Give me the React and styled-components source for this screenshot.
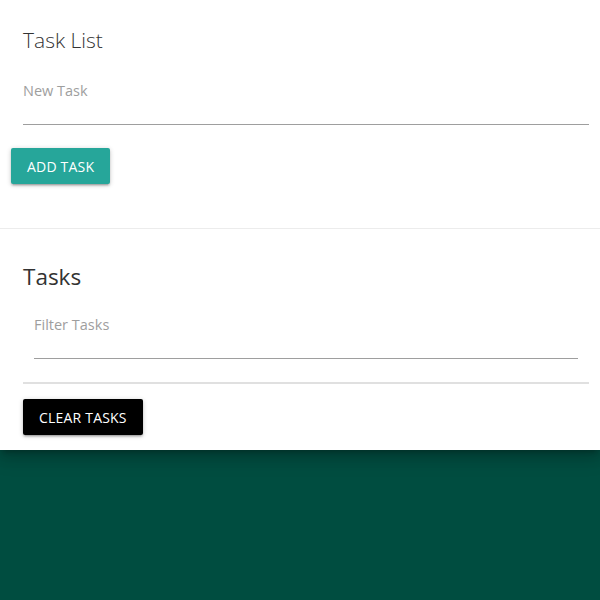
import React from "react";
import styled, { createGlobalStyle } from "styled-components";

const GlobalStyle = createGlobalStyle`
  html, body { margin: 0; padding: 0; }
  body {
    background: #004d40;
    min-height: 600px;
    font-family: "Open Sans", "Liberation Sans", sans-serif;
  }
`;

const Card = styled.div`
  background: #ffffff;
  box-shadow: 0 8px 17px 2px rgba(0, 0, 0, 0.14), 0 3px 14px 2px rgba(0, 0, 0, 0.12),
    0 5px 5px -3px rgba(0, 0, 0, 0.2);
`;

const Section = styled.section`
  display: flex;
  flex-direction: column;
  align-items: flex-start;
  padding: ${(p) => p.$pad};
  border-top: ${(p) => (p.$divided ? "1px solid #ececec" : "none")};
`;

const Title = styled.h2`
  margin: ${(p) => p.$margin || "0"};
  font-size: ${(p) => p.$size}px;
  font-weight: ${(p) => p.$weight};
  line-height: 32px;
  color: #333333;
`;

const Field = styled.div`
  align-self: stretch;
  margin-top: ${(p) => p.$top}px;
  padding: 0 ${(p) => p.$inset || 0}px;
`;

const Input = styled.input`
  display: block;
  width: 100%;
  box-sizing: border-box;
  height: 47px;
  margin: 0;
  padding: 0 0 21px 0;
  border: none;
  border-bottom: 1px solid #9e9e9e;
  background: transparent;
  outline: none;
  font-family: inherit;
  font-size: 14.5px;
  color: #333;
  &::placeholder {
    color: #9e9e9e;
  }
`;

const Button = styled.button`
  height: 36px;
  padding: 0 16px;
  margin: ${(p) => p.$margin};
  border: none;
  border-radius: 2px;
  background: ${(p) => p.$bg};
  color: #ffffff;
  font-family: inherit;
  font-size: 14px;
  font-weight: 400;
  letter-spacing: 0.2px;
  text-transform: uppercase;
  cursor: pointer;
  box-shadow: 0 2px 2px 0 rgba(0, 0, 0, 0.14), 0 3px 1px -2px rgba(0, 0, 0, 0.12),
    0 1px 5px 0 rgba(0, 0, 0, 0.2);
`;

const Collection = styled.ul`
  align-self: stretch;
  list-style: none;
  margin: 23px 0 0 0;
  padding: 0;
  border-top: 1px solid #e0e0e0;
  border-bottom: 1px solid #e0e0e0;
`;

export default function App() {
  return (
    <>
      <GlobalStyle />
      <Card>
        <Section $pad="24px 11px 44px 23px">
          <Title $size={21} $weight={300}>Task List</Title>
          <Field $top={22}>
            <Input type="text" placeholder="New Task" />
          </Field>
          <Button $bg="#26a69a" $margin="23px 0 0 -12px">Add Task</Button>
        </Section>
        <Section $divided $pad="16px 11px 15px 23px">
          <Title $size={22.5} $weight={400} $margin="16px 0 0 0">Tasks</Title>
          <Field $top={19} $inset={11}>
            <Input type="text" placeholder="Filter Tasks" />
          </Field>
          <Collection />
          <Button $bg="#000000" $margin="15px 0 0 0">Clear Tasks</Button>
        </Section>
      </Card>
    </>
  );
}
